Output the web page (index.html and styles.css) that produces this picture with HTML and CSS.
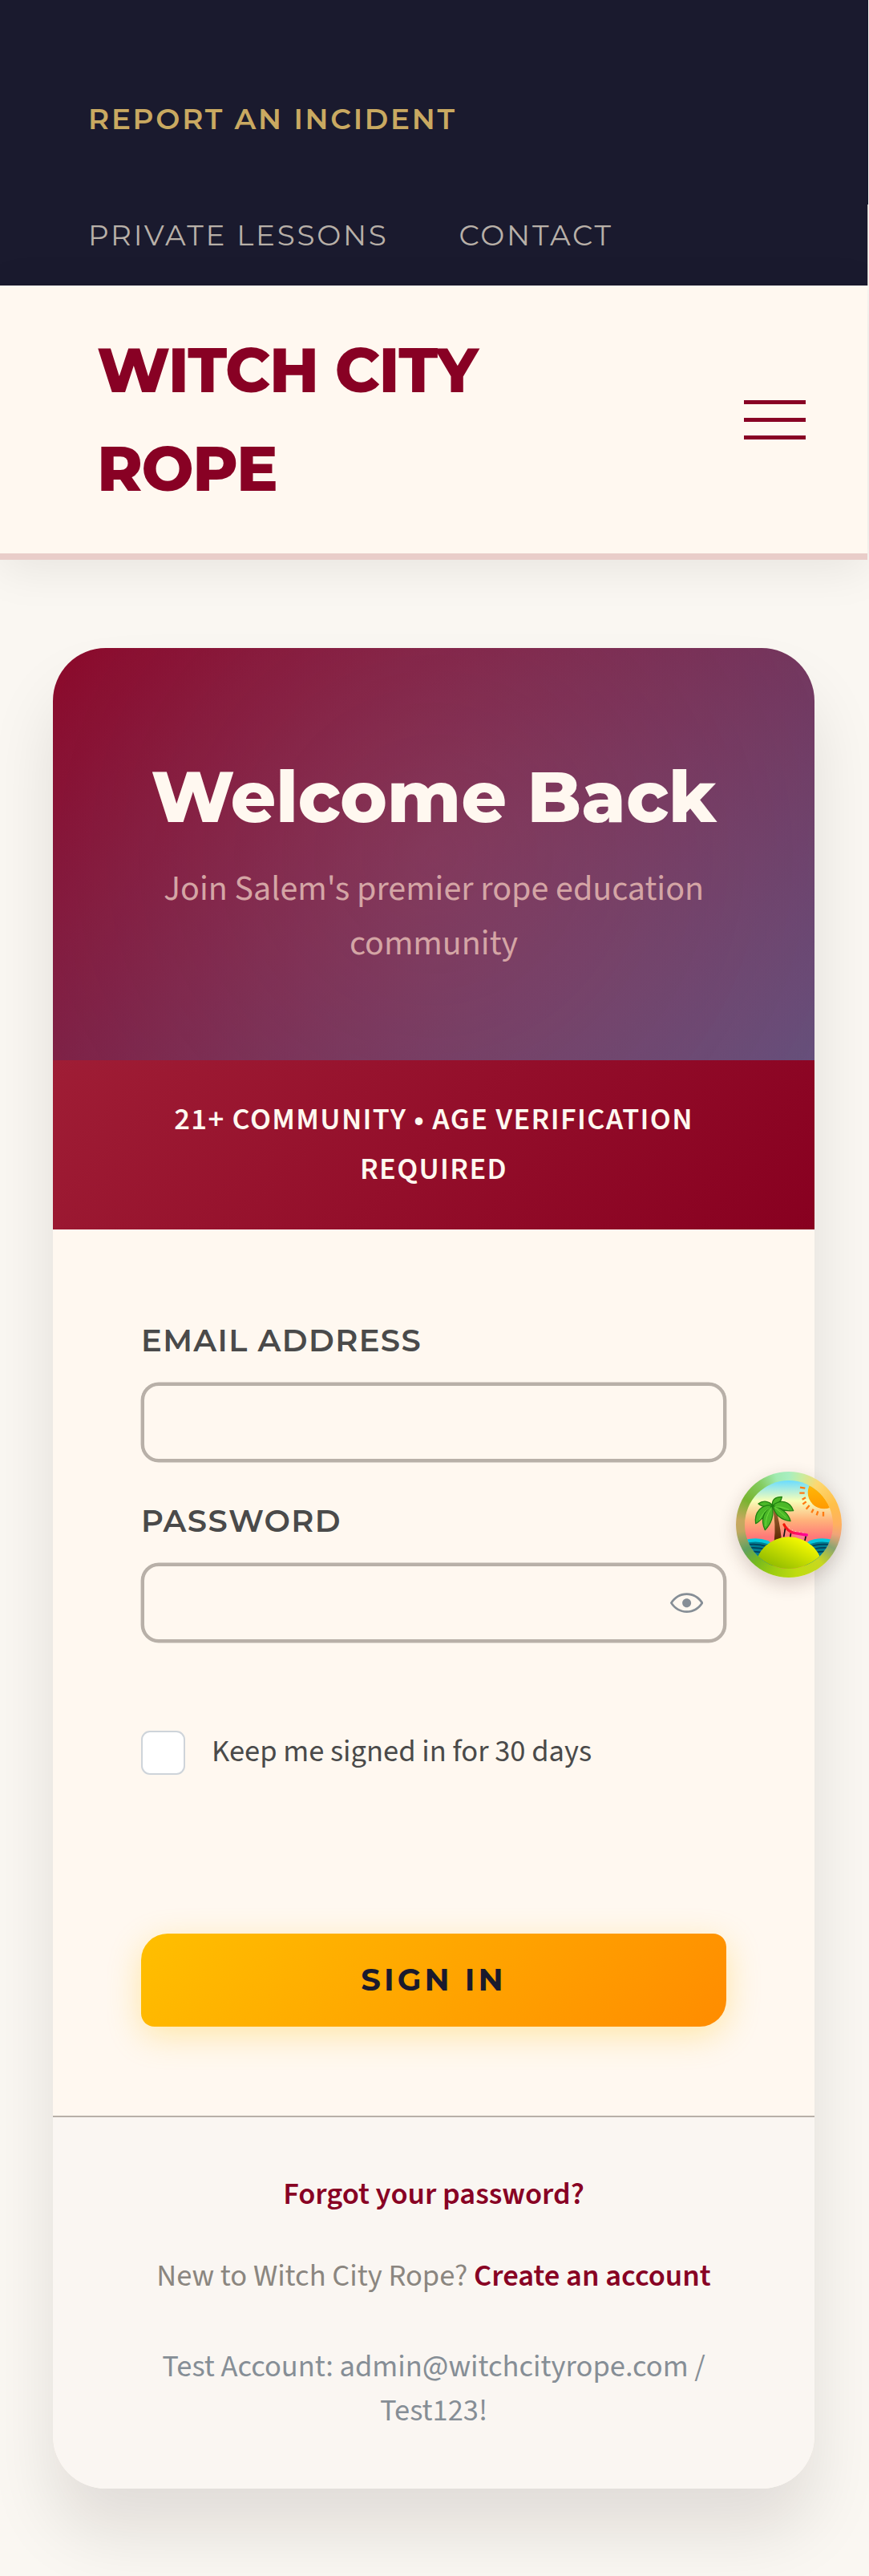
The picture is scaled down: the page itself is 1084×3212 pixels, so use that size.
FILE: index.html
```html
<!DOCTYPE html>
<html lang="en">
<head>
<meta charset="utf-8">
<title>Witch City Rope</title>
<link rel="stylesheet" href="styles.css">
</head>
<body>
<div class="topbar">
  <a class="topbar-link report">Report an Incident</a>
  <div class="topbar-row"><a class="topbar-link">Private Lessons</a><a class="topbar-link">Contact</a></div>
  <span class="edge"></span>
</div>
<header class="header">
  <a class="logo">WITCH CITY ROPE</a>
  <div class="burger"><span></span><span></span><span></span></div>
</header>
<main class="main">
  <section class="card">
    <div class="hero">
      <h1>Welcome Back</h1>
      <p>Join Salem's premier rope education community</p>
    </div>
    <div class="notice">21+ Community • Age Verification Required</div>
    <form class="form">
      <label class="label" for="email">Email Address</label>
      <div class="field"><input id="email" type="text"></div>
      <label class="label" for="password">Password</label>
      <div class="field">
        <input id="password" type="password">
        <svg class="eye" viewBox="0 0 15 15"><path fill="currentColor" fill-rule="evenodd" clip-rule="evenodd" d="M7.5 11C4.80285 11 2.52952 9.62184 1.09622 7.50001C2.52952 5.37816 4.80285 4 7.5 4C10.1971 4 12.4705 5.37816 13.9038 7.50001C12.4705 9.62183 10.1971 11 7.5 11ZM7.5 3C4.30786 3 1.65639 4.70638 0.0760002 7.23501C-0.0253338 7.39715 -0.0253334 7.60288 0.0760014 7.76501C1.65639 10.2936 4.30786 12 7.5 12C10.6921 12 13.3436 10.2936 14.924 7.76501C15.0253 7.60288 15.0253 7.39715 14.924 7.23501C13.3436 4.70638 10.6921 3 7.5 3ZM7.5 9.5C8.60457 9.5 9.5 8.60457 9.5 7.5C9.5 6.39543 8.60457 5.5 7.5 5.5C6.39543 5.5 5.5 6.39543 5.5 7.5C5.5 8.60457 6.39543 9.5 7.5 9.5Z"/></svg>
      </div>
      <div class="remember"><span class="checkbox"></span><span>Keep me signed in for 30 days</span></div>
      <button class="submit" type="button">Sign In</button>
    </form>
    <div class="footer">
      <p class="forgot"><a>Forgot your password?</a></p>
      <p class="signup">New to Witch City Rope? <a>Create an account</a></p>
      <p class="test">Test Account: admin@witchcityrope.com / Test123!</p>
    </div>
  </section>
</main>
<div class="devtools">
  <svg viewBox="52 44 396 396">
    <defs>
      <clipPath id="disc"><circle cx="250" cy="242" r="165"/></clipPath>
      <linearGradient id="sky" x1="0" y1="0" x2="0" y2="1"><stop offset="0" stop-color="#6bdcff"/><stop offset=".23" stop-color="#f8ffb8"/><stop offset=".45" stop-color="#ffb27a"/><stop offset=".64" stop-color="#ff7878"/></linearGradient>
      <linearGradient id="sand" x1=".75" y1="0" x2=".25" y2="1"><stop offset="0" stop-color="#ffff00"/><stop offset="1" stop-color="#3f8a00"/></linearGradient>
      <linearGradient id="sun" x1="0" y1="0" x2="0" y2="1"><stop offset="0" stop-color="#ffc20a"/><stop offset="1" stop-color="#ff9a00"/></linearGradient>
      <linearGradient id="trunk" x1="0" y1="0" x2="0" y2="1"><stop offset="0" stop-color="#a8693a"/><stop offset="1" stop-color="#5a2800"/></linearGradient>
      <linearGradient id="chair" gradientUnits="userSpaceOnUse" x1="230" y1="0" x2="318" y2="0"><stop offset="0" stop-color="#f01800"/><stop offset=".5" stop-color="#ff1060"/><stop offset="1" stop-color="#ff00a0"/></linearGradient>
    </defs>
    <g clip-path="url(#disc)">
      <rect x="80" y="77" width="340" height="331" fill="url(#sky)"/>
      <circle cx="382" cy="122" r="61" fill="url(#sun)"/>
      <path d="M292 103l19 3M290 124h19M300 148l13-7M315 184l12-14M335 198l7-14M354 207l5-15M379 211v-17M302 166l13-10" stroke="#ff7b12" stroke-width="7"/>
      <path d="M80 300q50-14 92 2l40 30v60H80zM420 300q-50-14-92 2l-40 30v60h132z" fill="#03c8de"/>
      <path d="M80 313q50-14 92 2l20 30v60H80zM420 313q-50-14-92 2l-20 30v60h112z" fill="#007c90"/>
      <path d="M80 320q45-10 90 4M80 333q45-10 90 4M80 347q45-10 90 4M420 320q-45-10-90 4M420 333q-45-10-90 4M420 347q-45-10-90 4" fill="none" stroke="#00405a" stroke-width="5"/>
      <path d="M189 178l11-2c10 38 18 76 22 116l-27 12c5-42 3-84-6-126z" fill="url(#trunk)"/>
      <g fill="#4cb828" stroke="#1f8010" stroke-width="4" stroke-linejoin="round">
        <path d="M188 172c-2-24 12-34 36-34-2 18-14 28-36 34z"/>
        <path d="M190 172c-12-18-36-22-54-8 14 12 32 14 54 8z"/>
        <path d="M190 170c30-24 64-16 77 20-30 2-58-2-77-20z"/>
        <path d="M188 170c-40-4-68 24-62 68 16-8 46-40 62-68z"/>
        <path d="M190 172c24 4 58 24 66 57-34-4-58-24-66-57z"/>
        <path d="M188 172c-32 18-46 50-27 90 22-22 34-54 27-90z"/>
      </g>
      <path d="M140 225q12-30 40-48M163 248q0-36 20-66M240 216q-18-20-42-38M250 186q-26-12-52-11" fill="none" stroke="#6fdc3e" stroke-width="3"/>
      <path d="M237 252l-6 36M258 272l-3 18M314 284l-4 18" stroke="#111" stroke-width="5"/>
      <path d="M258 276l52 8-8 18z" fill="#ff7898"/>
      <path d="M232 242q14 26 36 31l49 8" fill="none" stroke="url(#chair)" stroke-width="10" stroke-linecap="round"/>
      <path d="M240 244l28 22 44 7" fill="none" stroke="#ffc8d8" stroke-width="3" stroke-dasharray="3 11"/>
      <ellipse cx="250" cy="408" rx="126" ry="120" fill="url(#sand)"/>
    </g>
  </svg>
</div>
</body>
</html>
```
FILE: styles.css
```css
* { box-sizing: border-box; margin: 0; }
html { overflow: hidden; }
body {
  position: relative;
  width: 1084px;
  height: 3212px;
  overflow: hidden;
  background: #faf7f2;
  color: #4a4a4a;
  font: 400 38.5px/61.6px "Source Sans 3", "Noto Sans", sans-serif;
}
.topbar {
  position: relative;
  display: flex;
  flex-direction: column;
  gap: 88px;
  width: 1083px;
  height: 356px;
  padding: 120px 110px 0;
  background: #1a1a2e;
}
.topbar-row { display: flex; gap: 88px; }
.topbar-link {
  color: #b8b0a8;
  font: 400 35.75px/57.2px Montserrat, sans-serif;
  letter-spacing: 2.75px;
  text-transform: uppercase;
}
.topbar-link.report { color: #c9a961; font-weight: 600; }
.edge { position: absolute; top: 255px; right: 0; width: 1px; height: 101px; background: #c9c2c0; }
.header {
  position: relative;
  display: flex;
  align-items: center;
  justify-content: space-between;
  width: 1082px;
  height: 342px;
  padding: 0 77px 0 121px;
  background: #fff8f0;
  border-bottom: 8px solid #e9cdc9;
  box-shadow: 0 11px 55px rgba(0, 0, 0, .08);
}
.logo {
  width: 550px;
  color: #880124;
  font: 800 77px/123.2px Montserrat, sans-serif;
  letter-spacing: -1.375px;
}
.burger { display: flex; flex-direction: column; gap: 17px; margin-top: 1px; }
.burger span { width: 77px; height: 5px; background: #880124; }
.main { padding: 109.5px 68px 0 66px; }
.card {
  width: 950px;
  height: 2295px;
  overflow: hidden;
  border-radius: 66px;
  background: #fff8f0;
  box-shadow: 0 55px 82.5px rgba(20, 0, 8, .105);
}
.hero {
  height: 514.5px;
  padding: 111.5px 110px 0;
  text-align: center;
  background:
    radial-gradient(circle 756px at center, rgba(212, 165, 165, .15), transparent),
    linear-gradient(135deg, #880124, #614b79);
}
.hero h1 {
  margin-bottom: 6.5px;
  color: #fff8f0;
  font: 800 88px/149.6px Montserrat, sans-serif;
}
.hero p { color: #d4a5a5; font-size: 44px; line-height: 68.2px; }
.notice {
  height: 211px;
  padding: 44px 66px;
  color: #fff8f0;
  background: linear-gradient(135deg, #9f1d35, #880020);
  font-weight: 600;
  letter-spacing: 1.375px;
  text-align: center;
  text-transform: uppercase;
}
.form { display: flex; flex-direction: column; height: 1105px; padding: 108px 110px 0; }
.label {
  color: #4a4a4a;
  font: 600 38.5px/61.6px Montserrat, sans-serif;
  letter-spacing: 1.375px;
  text-transform: uppercase;
}
.field { position: relative; height: 99px; margin: 21.8px 0 42.7px; }
.field input {
  width: 100%;
  height: 99px;
  padding: 0 33px;
  border: 4px solid #b8b0a8;
  border-radius: 22px;
  background: #fff8f0;
  outline: 0;
  box-shadow: 0 0 0 .4px #b8b0a8;
}
.eye { position: absolute; top: 28.9px; right: 29px; width: 41.25px; height: 41.25px; color: #868e96; }
.remember { display: flex; align-items: center; gap: 33px; height: 55px; margin-top: 67px; }
.remember span:last-child { margin-top: -1px; }
.checkbox { width: 55px; height: 55px; border: 2px solid #ced4da; border-radius: 11px; background: #fff; }
.submit {
  height: 116px;
  margin-top: 198px;
  border: 0;
  border-radius: 33px 16.5px;
  color: #1a1a2e;
  background: linear-gradient(135deg, #ffbf00, #ff8c00);
  box-shadow: 0 11px 41px rgba(255, 191, 0, .3);
  font: 700 38.5px/61.6px Montserrat, sans-serif;
  letter-spacing: 4.125px;
  text-transform: uppercase;
}
.footer {
  height: 465px;
  padding: 65.5px 110px 0;
  border-top: 2.75px solid #b8b0a8;
  background: #faf6f2;
  text-align: center;
}
.footer a { color: #880124; font-weight: 600; }
.signup { margin-top: 41.4px; color: #8b8680; }
.test { margin-top: 54px; color: #868e96; line-height: 55px; }
.devtools {
  position: absolute;
  left: 917.5px;
  top: 1834.5px;
  width: 132px;
  height: 132px;
  border-radius: 50%;
  background: conic-gradient(#a8eec0 0deg, #c8eca0 15deg, #fdd870 35deg, #ffc04a 65deg, #ffb060 90deg, #f0a478 102deg, #8aa470 118deg, #c8d820 140deg, #c0dc10 170deg, #9ccc10 200deg, #74b820 222deg, #60a060 240deg, #c0a860 262deg, #c8a860 275deg, #78b430 300deg, #84cc60 325deg, #a0eab0 345deg, #a8eec0 360deg);
  box-shadow: 0 8px 22px rgba(60, 30, 20, .2);
}
.devtools svg { display: block; width: 100%; height: 100%; }
```
